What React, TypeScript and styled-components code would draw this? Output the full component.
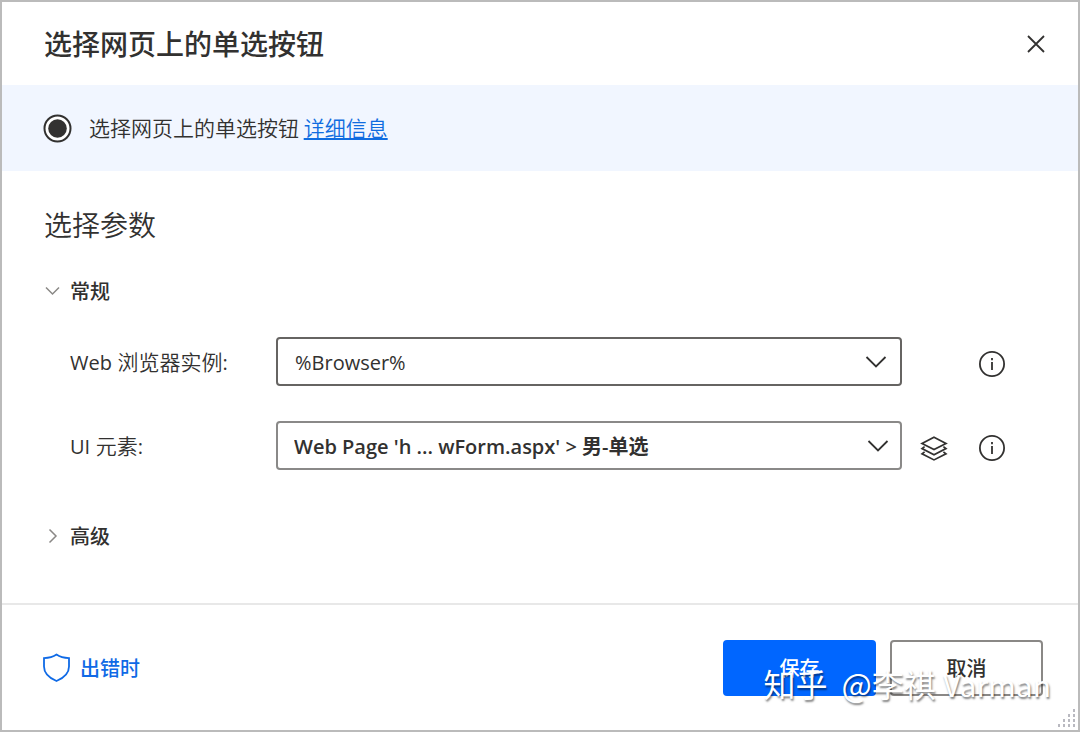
import React from 'react';
import styled, { createGlobalStyle } from 'styled-components';

const GlobalStyle = createGlobalStyle`
  * { box-sizing: border-box; }
  body {
    margin: 0;
    background: #fff;
    color: #323130;
    font-family: "Open Sans", "Noto Sans CJK SC", sans-serif;
    font-size: 20px;
    line-height: 28px;
  }
  button, select { font: inherit; color: inherit; }
`;

const Dialog = styled.main`
  position: relative;
  display: flex;
  flex-direction: column;
  min-height: 100vh;
  border: 2px solid #bbb;
  background: #fff;
`;

const Header = styled.header`
  display: flex;
  align-items: center;
  justify-content: space-between;
  height: 83px;
  padding: 0 28px 0 42px;
`;

const Title = styled.h1`
  margin: 0;
  padding-bottom: 2px;
  font-family: "Noto Sans CJK SC", sans-serif;
  font-size: 28px;
  line-height: 40px;
  font-weight: 500;
`;

const IconButton = styled.button`
  display: flex;
  align-items: center;
  justify-content: center;
  width: 28px;
  height: 28px;
  padding: 0;
  border: 0;
  background: none;
  cursor: pointer;
`;

const Banner = styled.section`
  display: flex;
  align-items: center;
  gap: 17px;
  height: 86px;
  padding: 0 41px;
  background: #f1f6ff;
`;

const BannerText = styled.p`
  margin: 0;
  padding-bottom: 2px;
  font-family: "Noto Sans CJK SC", sans-serif;
  font-size: 21px;
  font-weight: 350;
`;

const DetailsLink = styled.a`
  color: #0f6ce0;
  text-underline-offset: 2px;
`;

const Body = styled.section`
  flex: 1;
  padding: 33px 72px 0 42px;
`;

const SectionTitle = styled.h2`
  margin: 0 0 33px;
  font-family: "Noto Sans CJK SC", sans-serif;
  font-size: 28px;
  line-height: 40px;
  font-weight: 350;
`;

const GroupToggle = styled.button`
  display: flex;
  align-items: center;
  gap: 8px;
  height: 28px;
  padding: 0;
  border: 0;
  background: none;
  font-family: "Noto Sans CJK SC", sans-serif;
  font-weight: 500;
  cursor: pointer;
`;

const Fields = styled.div`
  display: grid;
  gap: 35px;
  padding: 32px 0 52px 26px;
`;

const Field = styled.div`
  display: grid;
  grid-template-columns: 206px minmax(0, 1fr) 28px 58px;
  align-items: center;

  > button { margin-top: 4px; }
`;

const Label = styled.label`
  padding-top: 2px;
  font-size: 21px;
  font-weight: 350;
`;

const Latin = styled.span`
  font-size: 20px;
  font-weight: 400;
`;

const SelectBox = styled.div<{ $strong?: boolean }>`
  display: grid;
  align-items: center;
  margin-right: 18px;

  > * { grid-area: 1 / 1; }
  > svg {
    justify-self: end;
    margin-right: ${(p) => (p.$strong ? 13 : 15)}px;
    pointer-events: none;
  }
`;

const Select = styled.select<{ $strong?: boolean }>`
  appearance: none;
  width: 100%;
  height: 49px;
  padding: 2px 48px 0 ${(p) => (p.$strong ? 16 : 17)}px;
  border: 2px solid ${(p) => (p.$strong ? '#8a8988' : '#666462')};
  border-radius: 4px;
  background: #fff;
  font-weight: ${(p) => (p.$strong ? 600 : 400)};
`;

const InfoButton = styled(IconButton)`
  grid-column: 4;
  justify-self: end;
`;

const Footer = styled.footer`
  display: flex;
  align-items: center;
  justify-content: space-between;
  height: 127px;
  padding: 0 35px 0 40px;
  border-top: 2px solid #e8e8e8;
`;

const ErrorButton = styled.button`
  display: flex;
  align-items: center;
  gap: 8px;
  padding: 0;
  border: 0;
  background: none;
  color: #0f6ae6;
  font-family: "Noto Sans CJK SC", sans-serif;
  font-weight: 500;
  cursor: pointer;
`;

const Actions = styled.div`
  display: flex;
  gap: 14px;
`;

const ActionButton = styled.button<{ $primary?: boolean }>`
  width: 153px;
  height: 56px;
  padding: 0;
  border: 2px solid ${(p) => (p.$primary ? '#0066ff' : '#8a8886')};
  border-radius: 4px;
  background: ${(p) => (p.$primary ? '#0066ff' : '#fff')};
  color: ${(p) => (p.$primary ? '#fff' : '#323130')};
  font-family: "Noto Sans CJK SC", sans-serif;
  font-weight: 500;
  cursor: pointer;
`;

const Watermark = styled.div`
  position: absolute;
  right: 27px;
  bottom: 20px;
  display: flex;
  align-items: baseline;
  gap: 14px;
  color: #fff;
  font-family: "Noto Sans CJK SC", sans-serif;
  font-size: 32px;
  line-height: 52px;
  text-shadow: 1px 2px 2px rgba(0, 0, 0, 0.5);
  white-space: nowrap;
  pointer-events: none;
`;

const WatermarkName = styled.span`
  font-size: 30px;
`;

const ResizeGrip = styled.svg`
  position: absolute;
  right: 1px;
  bottom: 2px;
`;

const Chevron = () => (
  <svg width="22" height="14" viewBox="0 0 22 14" fill="none" stroke="#323130" strokeWidth="1.8" aria-hidden="true">
    <path d="M1.5 2 11 11.5 20.5 2" />
  </svg>
);

const GroupChevron = ({ open }: { open?: boolean }) => (
  <svg width="18" height="18" viewBox="0 0 18 18" fill="none" stroke="#8a8886" strokeWidth="1.5" aria-hidden="true">
    <path d={open ? 'M2 5.5 8.5 12 15 5.5' : 'M5.5 2.5 12 9 5.5 15.5'} />
  </svg>
);

const InfoIcon = () => (
  <svg width="28" height="28" viewBox="0 0 28 28" fill="none" stroke="#323130" strokeWidth="1.8" aria-hidden="true">
    <circle cx="14" cy="14" r="12.1" />
    <path d="M14 12v8M14 8.1v2.1" />
  </svg>
);

const LayersIcon = () => (
  <svg width="28" height="28" viewBox="0 0 28 28" fill="none" stroke="#323130" strokeWidth="1.7" aria-hidden="true">
    <path d="M14 3.3 26 9.4 14 15.5 2 9.4Z" />
    <path d="M4.6 12.6 2 14.6 14 20.7 26 14.6 23.4 12.6" />
    <path d="M4.6 17.800 2 19.800 14 25.900 26 19.800 23.4 17.800" />
  </svg>
);

export default function App() {
  return (
    <>
      <GlobalStyle />
      <Dialog>
        <Header>
          <Title>选择网页上的单选按钮</Title>
          <IconButton aria-label="关闭">
            <svg width="20" height="20" viewBox="0 0 20 20" fill="none" stroke="#323130" strokeWidth="1.8">
              <path d="M2 2 18 18M18 2 2 18" />
            </svg>
          </IconButton>
        </Header>

        <Banner>
          <svg width="29" height="29" viewBox="0 0 29 29" aria-hidden="true">
            <circle cx="14.5" cy="14.5" r="13" fill="#fff" stroke="#323130" strokeWidth="2" />
            <circle cx="14.5" cy="14.5" r="9.3" fill="#323130" />
          </svg>
          <BannerText>
            选择网页上的单选按钮 <DetailsLink href="#details">详细信息</DetailsLink>
          </BannerText>
        </Banner>

        <Body>
          <SectionTitle>选择参数</SectionTitle>
          <GroupToggle aria-expanded="true">
            <GroupChevron open />
            常规
          </GroupToggle>
          <Fields>
            <Field>
              <Label htmlFor="browser"><Latin>Web</Latin> 浏览器实例<Latin>:</Latin></Label>
              <SelectBox>
                <Select id="browser">
                  <option>%Browser%</option>
                </Select>
                <Chevron />
              </SelectBox>
              <InfoButton aria-label="信息">
                <InfoIcon />
              </InfoButton>
            </Field>
            <Field>
              <Label htmlFor="element"><Latin>UI</Latin> 元素<Latin>:</Latin></Label>
              <SelectBox $strong>
                <Select id="element" $strong>
                  <option>Web Page 'h ... wForm.aspx' &gt; 男-单选</option>
                </Select>
                <Chevron />
              </SelectBox>
              <IconButton aria-label="选择元素">
                <LayersIcon />
              </IconButton>
              <InfoButton aria-label="信息">
                <InfoIcon />
              </InfoButton>
            </Field>
          </Fields>
          <GroupToggle aria-expanded="false">
            <GroupChevron />
            高级
          </GroupToggle>
        </Body>

        <Footer>
          <ErrorButton>
            <svg width="30" height="30" viewBox="0 0 30 30" fill="none" stroke="#0f6ae6" strokeWidth="1.8" aria-hidden="true">
              <path d="M14.5 1.5C10.8 4 6.5 4.9 2 5.1V13.5C2 20 6 24.5 14.5 28 23 24.5 27 20 27 13.5V5.1C22.5 4.9 18.2 4 14.5 1.5Z" />
            </svg>
            出错时
          </ErrorButton>
          <Actions>
            <ActionButton $primary>保存</ActionButton>
            <ActionButton>取消</ActionButton>
          </Actions>
        </Footer>

        <Watermark>
          <span>知乎</span>
          <span>@李祺 <WatermarkName>Varman</WatermarkName></span>
        </Watermark>
        <ResizeGrip width="20" height="20" viewBox="0 0 20 20" fill="#b9b9c0" aria-hidden="true">
          <path d="M16 1h2v3h-2zM11 6h2v3h-2zM16 6h2v3h-2zM6 11h2v3h-2zM11 11h2v3h-2zM16 11h2v3h-2zM1 16h2v3h-2zM6 16h2v3h-2zM11 16h2v3h-2zM16 16h2v3h-2z" />
        </ResizeGrip>
      </Dialog>
    </>
  );
}
